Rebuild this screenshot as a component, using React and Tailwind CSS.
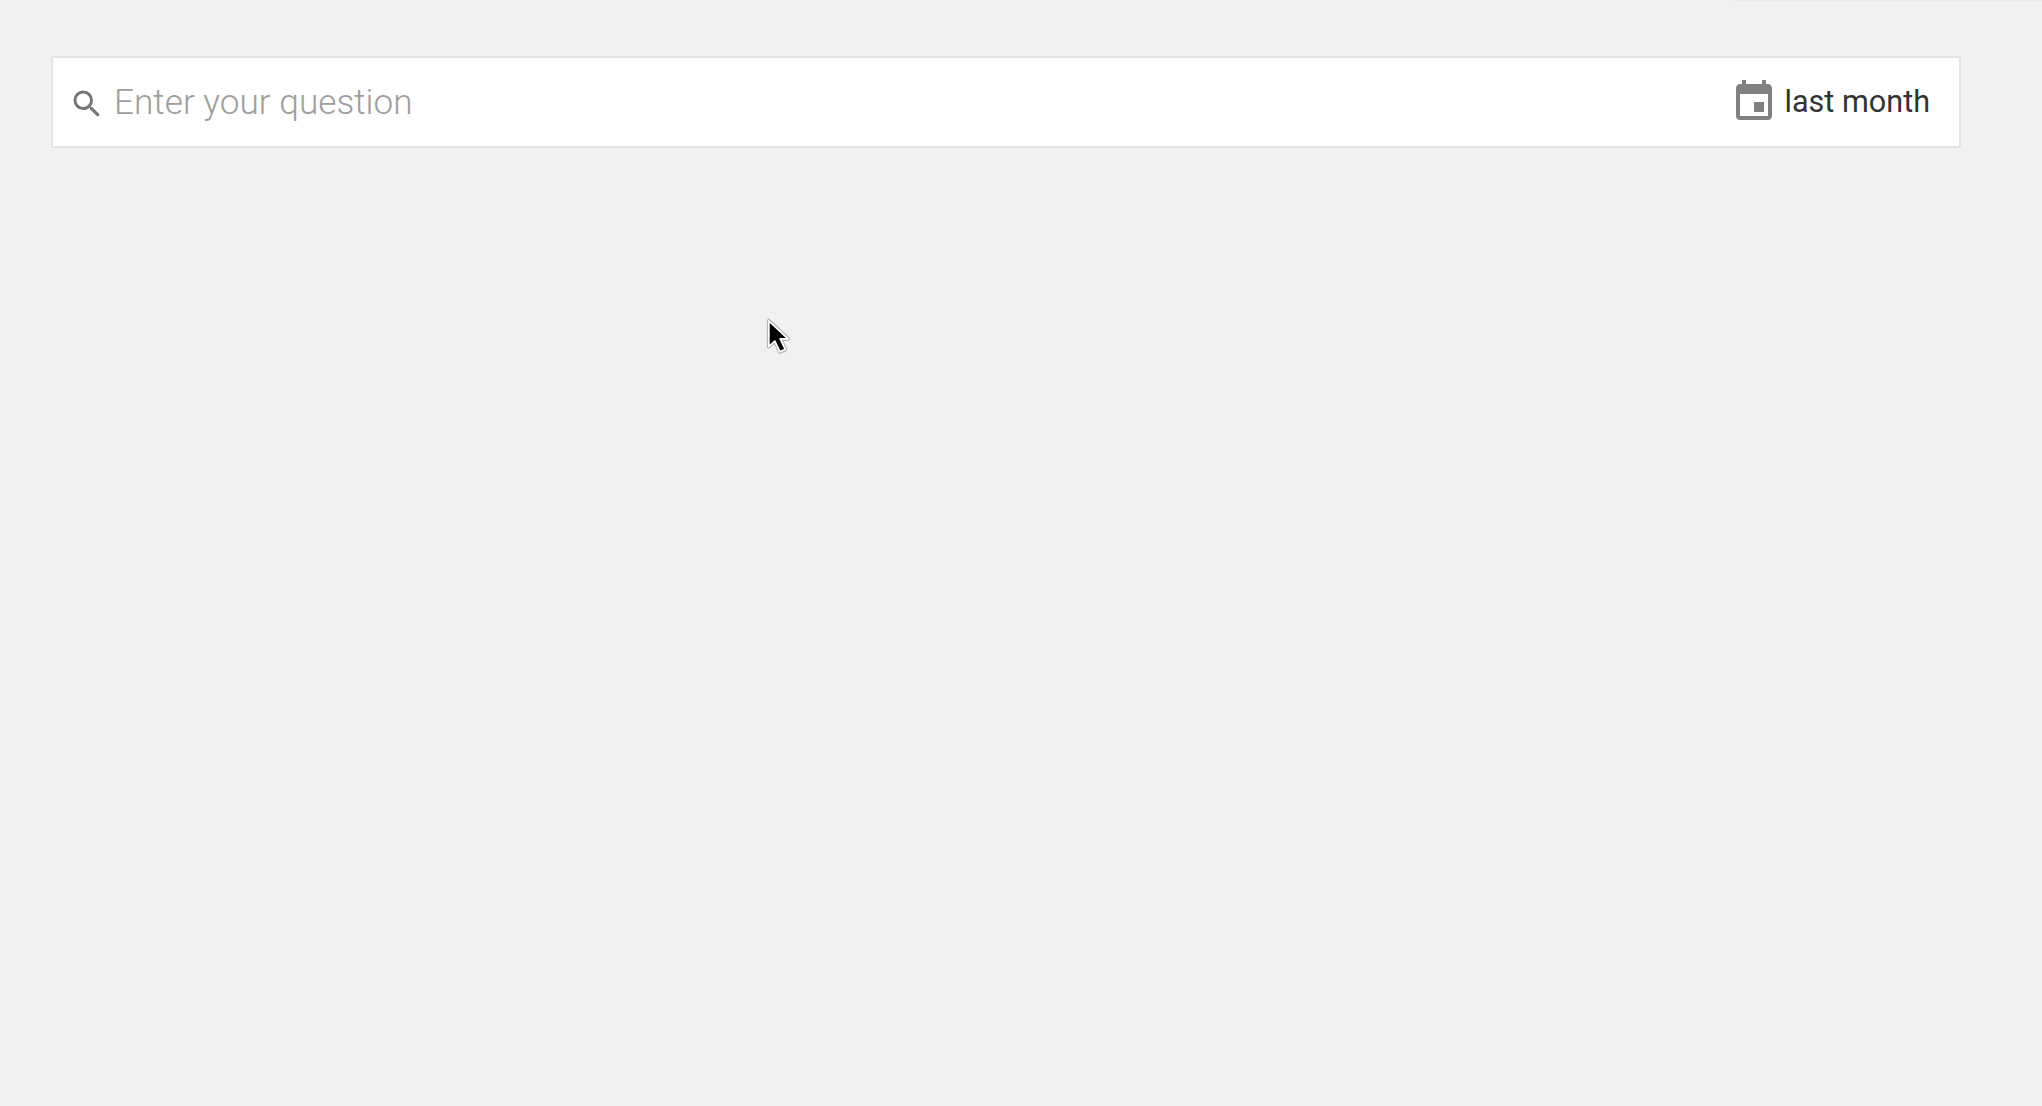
export default function App() {
  return (
    <div className="relative min-h-[1106px] bg-[#f1f1f1] pl-[51px] pr-[81px] pt-[56px]" style={{ fontFamily: "Roboto, sans-serif" }}>
      <div className="absolute right-0 top-0 h-px w-[309px] bg-[#ebebeb]" />
      <div className="flex h-[92px] w-[1910px] items-center border-2 border-[#e4e4e4] bg-white pl-[16px] pr-[29px]">
        <svg width="36" height="36" viewBox="0 0 24 24" fill="#757575" className="mr-[9px] mt-[3px] shrink-0">
          <path d="M15.5 14h-.79l-.28-.27A6.471 6.471 0 0 0 16 9.5 6.5 6.5 0 1 0 9.5 16c1.61 0 3.09-.59 4.23-1.57l.27.28v.79l5 4.99L20.49 19l-4.99-5zm-6 0C7.01 14 5 11.99 5 9.5S7.01 5 9.5 5 14 7.01 14 9.5 11.99 14 9.5 14z" />
        </svg>
        <span className="mt-[1px] flex-1 text-[35.2px] font-light leading-none text-[#9e9e9e]">Enter your question</span>
        <svg width="48" height="48" viewBox="0 0 24 24" fill="#808080" className="mr-[7px] shrink-0">
          <path d="M17 12h-5v5h5v-5zM16 1v2H8V1H6v2H5c-1.11 0-1.99.9-1.99 2L3 19c0 1.1.89 2 2 2h14c1.1 0 2-.9 2-2V5c0-1.1-.9-2-2-2h-1V1h-2zm3 18H5V8h14v11z" />
        </svg>
        <span className="text-[30.6px] leading-none text-[#333333]">last month</span>
      </div>
      <svg width="24" height="37" viewBox="0 0 26 40" className="absolute left-[766px] top-[318px]">
        <path d="M3 3 L3 31 L9.5 25 L15 36.5 L21 34 L15.5 22.5 L24 22.5 Z" fill="#000" stroke="#a8a8a8" strokeWidth="4" strokeLinejoin="round" />
        <path d="M3 3 L3 31 L9.5 25 L15 36.5 L21 34 L15.5 22.5 L24 22.5 Z" fill="#000" stroke="#fff" strokeWidth="2" strokeLinejoin="round" />
      </svg>
    </div>
  );
}
